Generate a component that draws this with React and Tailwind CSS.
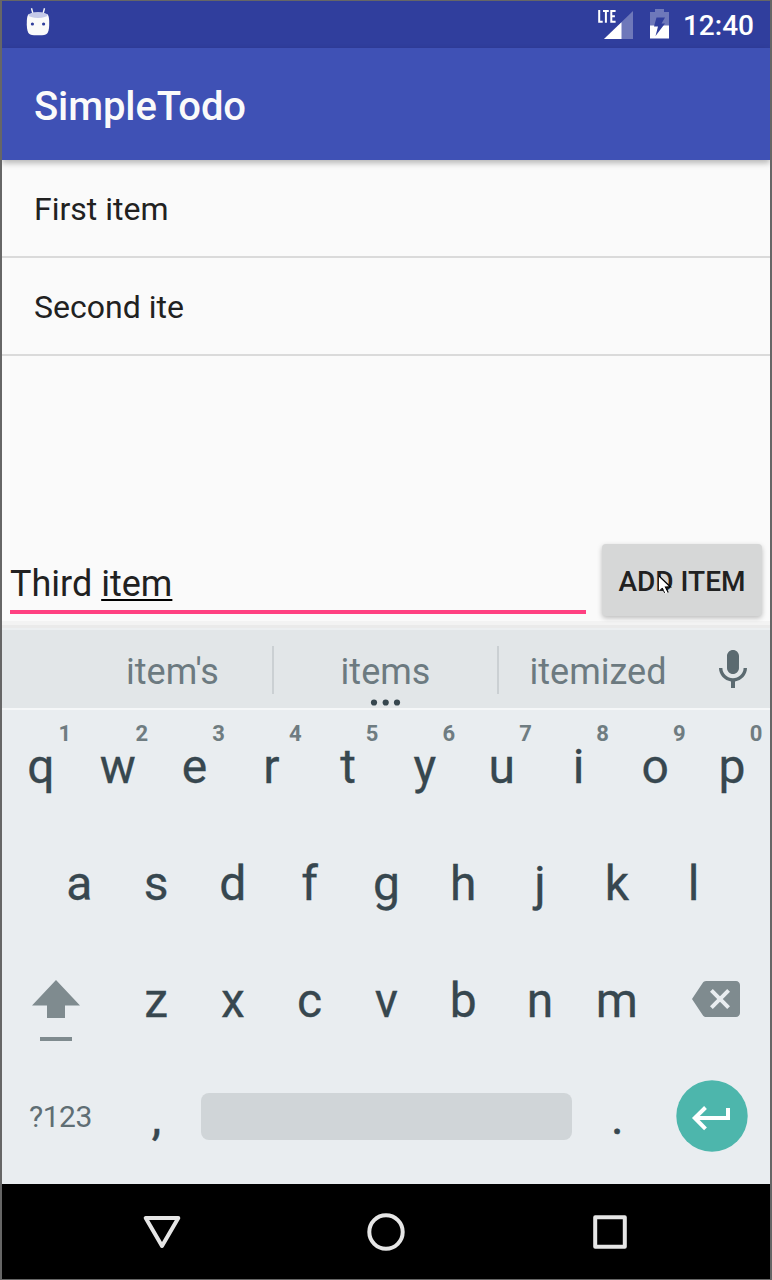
const TOP_ROW = ['q', 'w', 'e', 'r', 't', 'y', 'u', 'i', 'o', 'p']
const HOME_ROW = ['a', 's', 'd', 'f', 'g', 'h', 'j', 'k', 'l']
const BOTTOM_ROW = ['z', 'x', 'c', 'v', 'b', 'n', 'm']

function StatusBar() {
  return (
    <div className="flex h-[47px] items-start justify-between bg-[#303e9d] text-white">
      <svg className="mt-1.5 ml-6 h-8 w-6" viewBox="0 0 24 32">
        <path d="M5.500 1.200l1.500 5.500M18.500 1.200L17 6.700" stroke="#fafafa" strokeWidth="1.400" fill="none" />
        <path d="M3 7Q1 8 .8 14c-.2 6 .3 9.500 1.500 11.700Q3.500 27.800 8 28.200h8q4.500-.4 5.700-2.500C22.900 23.500 23.400 20 23.200 14Q23 8 21 7z" fill="#fafafa" />
        <ellipse cx="12" cy="8" rx="9.500" ry="3" fill="#c5cae9" />
        <circle cx="6.400" cy="17" r="1.600" fill="#303e9d" />
        <circle cx="17.600" cy="17" r="1.600" fill="#303e9d" />
      </svg>
      <div className="flex pr-4">
        <svg className="mt-2 h-8 w-9" viewBox="0 0 36 32">
          <path d="M35 2v28H6z" fill="#fff" opacity=".3" />
          <path d="M23.500 13.200V30H6z" fill="#fff" />
          <path d="M0 0h18.500v13H0z" fill="#303e9d" />
          <path d="M1.200 1v12.700M.3 12.700h4.400M5 2h5.800M7.900 1.500v12.200M17.600 2h-4.300v10.700h4.300M13 7.300h3.900" stroke="#fff" strokeWidth="2" fill="none" />
        </svg>
        <svg className="mt-2 ml-4 h-8 w-5" viewBox="0 0 20 32">
          <path d="M5 0h9v3h5v14H0V3h5z" fill="#fff" opacity=".3" />
          <path d="M0 16.500h19V29.500H0z" fill="#fff" />
          <path d="M6.500 8.500h8.500l-3.500 6H15L5.500 27l2.500-9.500H4z" fill="#303e9d" />
        </svg>
        <span className="ml-[13px] pt-px text-[28px] leading-[47px] font-medium">12:40</span>
      </div>
    </div>
  )
}

function AppBar() {
  return (
    <header className="relative h-28 bg-[#3f51b5] pt-[3px] pl-8 text-[40px] leading-[112px] font-medium tracking-[-0.1px] text-[#fafafa] shadow-[0_3px_6px_rgba(0,0,0,0.28)]">
      SimpleTodo
    </header>
  )
}

function TodoList({ items }) {
  return (
    <ul className="h-[372px]">
      {items.map((item) => (
        <li key={item} className="h-[98px] border-b-2 border-[#dadada] pt-px pl-8 text-[32px] leading-[96px]">
          {item}
        </li>
      ))}
    </ul>
  )
}

function Composer() {
  return (
    <div className="h-[98px]">
      <div className="relative flex h-[89px] justify-between pt-3 pr-2 pl-2">
        <div className="h-[70px] w-[576px] border-b-4 border-[#ff4081] pt-px text-[36px] leading-[79px]">
          Third{' '}
          <span className="underline decoration-black decoration-2 underline-offset-[3px] [text-decoration-skip-ink:none]">item</span>
        </div>
        <div className="relative h-[72px] w-40 rounded bg-[#d6d7d7] pt-px text-center text-[28px] leading-[73px] font-medium shadow-[0_2px_5px_rgba(0,0,0,0.25)]">
          ADD ITEM
          <svg className="absolute top-[31px] left-[56px] h-5 w-4" viewBox="0 0 16 20">
            <path d="M1 1v14.500l3.500-3.200 2.800 6.200 2.800-1.300-2.800-5.700h5z" fill="#fff" />
            <path d="M1 1l11.500 11H7.500l2.700 5.500" fill="none" stroke="#000" strokeWidth="1.200" />
            <path d="M4 13l3 5.500" fill="none" stroke="#000" strokeDasharray="2 1.500" />
          </svg>
        </div>
      </div>
      <div className="h-1 bg-[#f3f3f3]" />
      <div className="h-[3px] bg-[#eaeaea]" />
      <div className="h-0.5 bg-[#eceff1]" />
    </div>
  )
}

function Suggestions() {
  return (
    <div className="flex h-20 items-start border-b-2 border-[#f5f7f8] bg-[#e2e6e8] text-[36px] leading-[85px] text-[#6c7a80]">
      <div className="w-[270px] pl-[71px] text-center">item's</div>
      <div className="mt-4 h-12 w-0.5 bg-[#cbd0d3]" />
      <div className="relative w-[223px] text-center">
        items
        <svg className="absolute top-[69px] left-[96px] h-2 w-8" viewBox="0 0 32 8" fill="#37474f">
          <circle cx="4" cy="3.500" r="3.100" />
          <circle cx="15.700" cy="3.500" r="3.100" />
          <circle cx="27" cy="3.500" r="3.100" />
        </svg>
      </div>
      <div className="mt-4 h-12 w-0.5 bg-[#cbd0d3]" />
      <div className="w-[198px] text-center">itemized</div>
      <svg className="mt-4 ml-3 size-12" viewBox="0 0 24 24" fill="#5b6a70">
        <path d="M12 14c1.660 0 2.990-1.340 2.990-3L15 5c0-1.660-1.340-3-3-3S9 3.340 9 5v6c0 1.660 1.340 3 3 3zm5.300-3c0 3-2.540 5.100-5.300 5.100S6.700 14 6.700 11H5c0 3.410 2.720 6.230 6 6.720V21h2v-3.280c3.280-.48 6-3.300 6-6.720h-1.700z" />
      </svg>
    </div>
  )
}

function Key({ label, hint }) {
  return (
    <div className="h-[117px] w-[76.8px] text-center">
      <div className="h-7 pt-[10px] pl-[49px] text-[22px] leading-7 font-bold text-[#6f7c81]">{hint}</div>
      <div className="pl-px text-[48px] leading-[57px] [-webkit-text-stroke:0.3px_#37474f]">{label}</div>
    </div>
  )
}

function Keyboard() {
  return (
    <div className="h-[474px] bg-[#e9edf0] text-[#37474f]">
      <div className="flex">
        {TOP_ROW.map((k, i) => (
          <Key key={k} label={k} hint={(i + 1) % 10} />
        ))}
      </div>
      <div className="flex justify-center">
        {HOME_ROW.map((k) => (
          <Key key={k} label={k} />
        ))}
      </div>
      <div className="flex">
        <div className="w-[115.2px] pt-[34px] pl-[30px]">
          <svg className="h-[66px] w-12" viewBox="0 0 48 66" fill="#7f8b8f">
            <path d="M24 2l24 25.500h-15V40H15V27.500H0z" />
            <path d="M8 59h32v4H8z" />
          </svg>
        </div>
        {BOTTOM_ROW.map((k) => (
          <Key key={k} label={k} />
        ))}
        <svg className="mt-[31px] ml-[37px] size-12" viewBox="0 0 24 24" fill="#7f8b8f">
          <path d="M22 3H7c-.69 0-1.230.35-1.590.88L0 12l5.410 8.110c.36.53.9.89 1.590.89h15c1.100 0 2-.9 2-2V5c0-1.100-.9-2-2-2zm-3 12.590L17.590 17 14 13.410 10.410 17 9 15.590 12.590 12 9 8.410 10.410 7 14 10.590 17.590 7 19 8.410 15.410 12 19 15.590z" />
        </svg>
      </div>
      <div className="flex">
        <div className="w-[115.2px] pt-[29px] pl-[27px] text-[30px] leading-[54px] tracking-[-0.5px] text-[#5f6e74]">?123</div>
        <div className="w-[76.8px] pt-7 pl-0.5 text-center text-[48px] leading-[57px] [-webkit-text-stroke:0.5px_#37474f]">,</div>
        <div className="mt-8 ml-[7px] h-[47px] w-[371px] rounded-lg bg-[#d0d5d8]" />
        <div className="ml-[6px] w-[76.8px] pt-7 pl-0.5 text-center text-[48px] leading-[57px] [-webkit-text-stroke:0.5px_#37474f]">.</div>
        <svg className="mt-[19px] ml-[21px] size-[72px]" viewBox="0 0 72 72">
          <circle cx="36" cy="36" r="35.700" fill="#4db6ac" />
          <path d="M52 28v10H19M29.500 27.500L18.800 38l10.700 10.800" fill="none" stroke="#fff" strokeWidth="4" />
        </svg>
      </div>
    </div>
  )
}

function NavBar() {
  return (
    <div className="flex h-[95px] items-start gap-[176px] bg-black pt-6 pl-[136px]">
      <svg className="size-12" viewBox="0 0 48 48" fill="none" stroke="#e6e6e6" strokeWidth="4" strokeLinejoin="round">
        <path d="M7.700 10h32.600L24 38z" />
      </svg>
      <svg className="size-12" viewBox="0 0 48 48" fill="none" stroke="#e6e6e6" strokeWidth="4">
        <circle cx="24" cy="24" r="16.700" />
      </svg>
      <svg className="size-12" viewBox="0 0 48 48" fill="none" stroke="#e6e6e6" strokeWidth="4" strokeLinejoin="round">
        <rect x="9.200" y="9.200" width="29.600" height="29.600" />
      </svg>
    </div>
  )
}

export default function App() {
  return (
    <div className="h-[1280px] w-[772px] overflow-hidden border-x-2 border-y border-[#666] bg-[#fafafa] font-[Roboto,sans-serif] text-[#212121]">
      <StatusBar />
      <AppBar />
      <TodoList items={['First item', 'Second ite']} />
      <Composer />
      <Suggestions />
      <Keyboard />
      <NavBar />
    </div>
  )
}
